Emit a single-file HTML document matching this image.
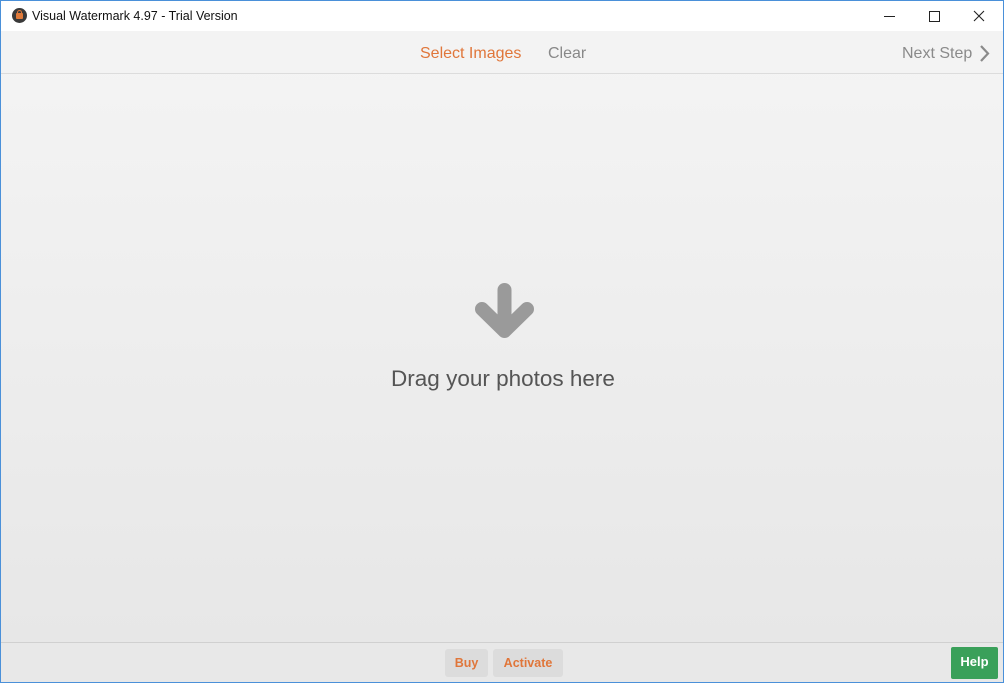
<!DOCTYPE html>
<html><head><meta charset="utf-8"><style>
*{margin:0;padding:0;box-sizing:border-box}
body{width:1004px;height:683px;overflow:hidden;font-family:"Liberation Sans","DejaVu Sans",sans-serif;background:#fff}
.win{position:absolute;left:0;top:0;width:1004px;height:683px;border:1px solid #4a90d9;background:linear-gradient(#f5f5f5,#e6e6e6)}
.title{position:absolute;left:0;top:0;width:1002px;height:30px;background:#fff}
.title .t{position:absolute;left:31px;top:8px;font-size:12.5px;color:#111}
.ico{position:absolute;left:11px;top:7px;width:15px;height:15px;border-radius:50%;background:#3a3a3a}
.ico:after{content:"";position:absolute;left:4px;top:5px;width:7px;height:6px;background:#e07a3a;border-radius:1px}
.ico:before{content:"";position:absolute;left:5px;top:2px;width:3px;height:4px;border:1.5px solid #e07a3a;border-bottom:none;border-radius:3px 3px 0 0}
.bar{position:absolute;left:0;top:30px;width:1002px;height:43px;border-bottom:1px solid #dcdcdc;background:#f3f3f3}
.bar span{position:absolute;top:14px;font-size:16px}
.foot{position:absolute;left:0;top:641px;width:1002px;height:40px;border-top:1px solid #d0d0d0;background:#e8e8e8}
.btn{position:absolute;top:6px;height:28px;background:#dcdcdc;border-radius:3px;color:#e0763a;font-weight:bold;font-size:12.5px;line-height:28px;text-align:center}
</style></head><body>
<div class="win">
<div class="title"><div class="ico"></div><div class="t">Visual Watermark 4.97 - Trial Version</div>
<svg style="position:absolute;left:880px;top:8px" width="110" height="14"><path d="M3 7.5H14" stroke="#222" stroke-width="1"/><rect x="48.5" y="2.5" width="10" height="10" fill="none" stroke="#222"/><path d="M93 2L103 12M103 2L93 12" stroke="#222" stroke-width="1.1"/></svg>
</div>
<div class="bar">
<span style="left:419px;color:#e0763a">Select Images</span>
<span style="left:547px;color:#888">Clear</span>
<span style="left:901px;color:#8a8a8a">Next Step</span>
<svg style="position:absolute;left:978px;top:13px" width="12" height="20"><path d="M2 2L9 9.5L2 17" fill="none" stroke="#8a8a8a" stroke-width="2.2"/></svg>
</div>
<svg style="position:absolute;left:0;top:0" width="1004" height="683"><g fill="none" stroke="#9a9a9a" stroke-width="14" stroke-linecap="round" stroke-linejoin="round"><path d="M503.5 289V326"/><path d="M481 308L503.5 330L526 308"/></g></svg>
<div style="position:absolute;left:0;width:1004px;top:365px;text-align:center;font-size:22.5px;color:#555">Drag your photos here</div>
<div class="foot">
<div class="btn" style="left:444px;width:43px">Buy</div>
<div class="btn" style="left:492px;width:70px">Activate</div>
<div style="position:absolute;left:950px;top:4px;width:47px;height:32px;background:#3aa05a;border-radius:2px;color:#fff;font-weight:bold;font-size:13px;text-align:center;line-height:30px">Help</div>
</div>
</div>
</body></html>
